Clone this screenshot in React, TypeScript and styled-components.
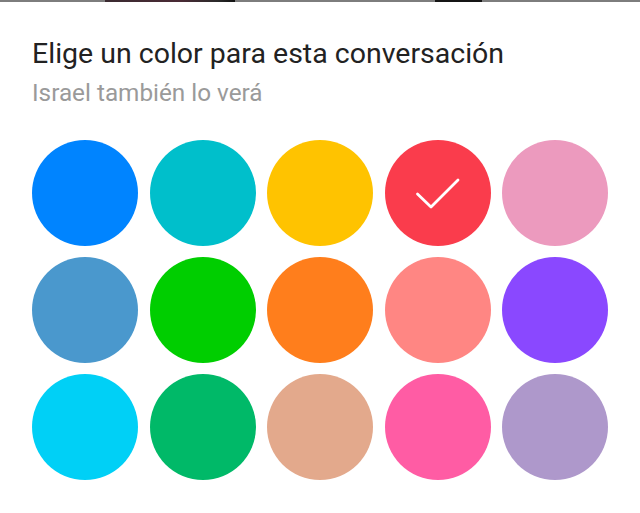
import React from "react";
import styled, { createGlobalStyle } from "styled-components";

const GlobalStyle = createGlobalStyle`
  html, body { margin: 0; padding: 0; background: #ffffff; }
  body { font-family: Roboto, "Noto Sans", Arial, sans-serif; }
  * { box-sizing: border-box; }
`;

const Page = styled.div`
  width: 640px;
  height: 513px;
  background: #ffffff;
  overflow: hidden;
  display: flex;
  flex-direction: column;
`;

const TopStrip = styled.div`
  height: 2px;
  width: 100%;
  background: linear-gradient(
    to right,
    #7d7d7d 0px,
    #7d7d7d 105px,
    #3a2a30 105px,
    #4a2a35 180px,
    #2a2a2a 218px,
    #111 235px,
    #7d7d7d 235px,
    #7d7d7d 435px,
    #151515 435px,
    #151515 482px,
    #7d7d7d 482px
  );
`;

const Header = styled.header`
  padding: 34.75px 0 0 32px;
  display: flex;
  flex-direction: column;
  gap: 8px;
`;

const Title = styled.h1`
  margin: 0;
  font-size: 28.5px;
  line-height: 33px;
  font-weight: 400;
  color: #222222;
`;

const Subtitle = styled.p`
  margin: 0;
  font-size: 24.3px;
  line-height: 29px;
  font-weight: 400;
  color: #9a9a9a;
`;

const Grid = styled.div`
  margin-top: 33px;
  padding-left: 32px;
  display: grid;
  grid-template-columns: repeat(5, 106px);
  grid-auto-rows: 106px;
  column-gap: 11.5px;
  row-gap: 11px;
`;

const Swatch = styled.button<{ $color: string }>`
  width: 106px;
  height: 106px;
  border: none;
  padding: 0;
  border-radius: 50%;
  background: ${(p) => p.$color};
  display: flex;
  align-items: center;
  justify-content: center;
  cursor: pointer;
`;

const colors = [
  "#0084FF",
  "#00BFCB",
  "#FFC300",
  "#FA3C4C",
  "#EC9ABE",
  "#4A98CD",
  "#00CE00",
  "#FF7E1C",
  "#FF8683",
  "#8A48FF",
  "#00D0F6",
  "#00B968",
  "#E3A98C",
  "#FF5CA4",
  "#AE98CB",
];

const Check = () => (
  <svg width="106" height="106" viewBox="0 0 106 106" fill="none">
    <path
      d="M32.5 68 L46 81 L73 54"
      transform="translate(0 -14)"
      stroke="#ffffff"
      strokeWidth="2.8"
      strokeLinecap="round"
      strokeLinejoin="round"
    />
  </svg>
);

export default function App() {
  return (
    <Page>
      <GlobalStyle />
      <TopStrip />
      <Header>
        <Title>Elige un color para esta conversación</Title>
        <Subtitle>Israel también lo verá</Subtitle>
      </Header>
      <Grid>
        {colors.map((c, i) => (
          <Swatch key={c} $color={c} aria-label={`color ${i + 1}`}>
            {i === 3 ? <Check /> : null}
          </Swatch>
        ))}
      </Grid>
    </Page>
  );
}
